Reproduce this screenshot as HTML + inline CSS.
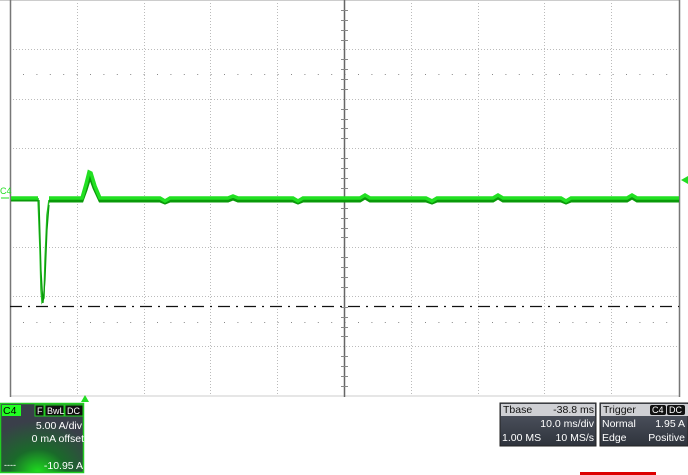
<!DOCTYPE html>
<html><head><meta charset="utf-8"><style>
html,body{margin:0;padding:0;background:#fff;width:688px;height:475px;overflow:hidden;font-family:"Liberation Sans",sans-serif}
.p{position:absolute;font-size:10.5px;color:#fff;line-height:12px}
</style></head><body>
<svg width="688" height="475" style="position:absolute;left:0;top:0">
<g stroke="#bbb" stroke-width="1" stroke-dasharray="1 2" fill="none">
<line x1="77.5" y1="0" x2="77.5" y2="396"/><line x1="144.5" y1="0" x2="144.5" y2="396"/>
<line x1="210.5" y1="0" x2="210.5" y2="396"/><line x1="277.5" y1="0" x2="277.5" y2="396"/>
<line x1="411.5" y1="0" x2="411.5" y2="396"/><line x1="478.5" y1="0" x2="478.5" y2="396"/>
<line x1="544.5" y1="0" x2="544.5" y2="396"/><line x1="611.5" y1="0" x2="611.5" y2="396"/>
<line x1="10" y1="49.5" x2="679" y2="49.5"/><line x1="10" y1="99.5" x2="679" y2="99.5"/>
<line x1="10" y1="148.5" x2="679" y2="148.5"/><line x1="10" y1="247.5" x2="679" y2="247.5"/>
<line x1="10" y1="296.5" x2="679" y2="296.5"/><line x1="10" y1="346.5" x2="679" y2="346.5"/>
</g>
<g stroke="#888" stroke-width="1" stroke-dasharray="1 12.4">
<line x1="23" y1="74.5" x2="679" y2="74.5"/><line x1="23" y1="322.5" x2="679" y2="322.5"/>
</g>
<line x1="0" y1="0.5" x2="680" y2="0.5" stroke="#ccc"/>
<line x1="10" y1="396" x2="680" y2="396" stroke="#ccc"/>
<line x1="10.5" y1="0" x2="10.5" y2="397" stroke="#777" stroke-width="1.5"/>
<line x1="679.5" y1="0" x2="679.5" y2="397" stroke="#777" stroke-width="1.5"/>
<line x1="344.5" y1="0" x2="344.5" y2="397" stroke="#666" stroke-width="1.5"/>
<g stroke="#888" stroke-width="1">
<path d="M341 10.5h7M341 20.5h7M341 30.5h7M341 40.5h7M341 59.5h7M341 69.5h7M341 79.5h7M341 89.5h7M341 109.5h7M341 119.5h7M341 128.5h7M341 138.5h7M341 158.5h7M341 168.5h7M341 178.5h7M341 188.5h7M341 208.5h7M341 218.5h7M341 228.5h7M341 237.5h7M341 257.5h7M341 267.5h7M341 277.5h7M341 287.5h7M341 307.5h7M341 317.5h7M341 327.5h7M341 336.5h7M341 356.5h7M341 366.5h7M341 376.5h7M341 386.5h7"/>
</g>
<line x1="10" y1="306.5" x2="679" y2="306.5" stroke="#111" stroke-width="1.2" stroke-dasharray="12 6 2 6"/>
<polyline fill="none" stroke="#22c022" stroke-width="1.5" points="38,198 40,250 41,290 42,302 44,298 45,260 47,215 49,200"/>
<polyline fill="none" stroke="#0a9a0a" stroke-width="1.2" points="39,200 41,270 43,303 45,280 47,230 49,205"/>
<polyline fill="none" stroke="#0a9a0a" stroke-width="3" points="11,200 38,200 M50,201"/>
<polyline fill="none" stroke="#0a9a0a" stroke-width="3" points="11,200 38,200"/>
<polyline fill="none" stroke="#0a9a0a" stroke-width="3" points="49,201 82,201 86,190 90,177 94,188 100,201 160,201 165,203 170,201 228,201 233,199 238,201 293,201 298,203 303,201 360,201 365,198 370,201 426,201 432,203 437,201 493,201 498,198 503,201 561,201 566,203 571,201 627,201 632,198 637,201 679,201"/>
<polyline fill="none" stroke="#22e022" stroke-width="3.5" points="11,198 38,198"/>
<polyline fill="none" stroke="#22e022" stroke-width="3.5" points="49,198 82,198 86,184 89,172 91,173 95,186 100,198 160,198 165,201 170,198 228,198 233,196 238,198 293,198 298,201 303,198 360,198 365,195 370,198 426,198 432,201 437,198 493,198 498,195 503,198 561,198 566,201 571,198 627,198 632,195 637,198 679,198"/>
<text x="0" y="194" font-size="9" fill="#2d2" font-family="Liberation Sans">C4</text>
<path d="M1 198h8" stroke="#2d2"/>
<path d="M681 180l7-4v8z" fill="#2d2"/>
<path d="M81 402l4-7 4 7z" fill="#2d2"/>
<defs>
<radialGradient id="g" cx="0.45" cy="1" r="0.75"><stop offset="0" stop-color="#1ee01e"/><stop offset="0.45" stop-color="#1a6a2a"/><stop offset="1" stop-color="#3a3f4a"/></radialGradient>
<linearGradient id="h" x1="0" y1="0" x2="0" y2="1"><stop offset="0" stop-color="#555a66"/><stop offset="1" stop-color="#2e333c"/></linearGradient>
</defs>
<rect x="0.5" y="403.5" width="83" height="69" fill="url(#g)" stroke="#2c2" stroke-width="1.5"/>
<rect x="2" y="405" width="19" height="11" fill="#2f2"/>
<rect x="500" y="403" width="96" height="43" fill="url(#h)" stroke="#222"/>
<rect x="501" y="404" width="94" height="12" fill="#cfd0d4"/>
<rect x="600" y="403" width="88" height="43" fill="url(#h)" stroke="#222"/>
<rect x="601" y="404" width="87" height="12" fill="#cfd0d4"/>
<rect x="650" y="405" width="16" height="10" fill="#111" rx="2"/>
<rect x="667" y="405" width="18" height="10" fill="#111" rx="2"/>
<rect x="35" y="405" width="9" height="11" fill="#111" stroke="#2c2"/>
<rect x="45" y="405" width="19" height="11" fill="#111" stroke="#2c2"/>
<rect x="65" y="405" width="18" height="11" fill="#111" stroke="#2c2"/>
<rect x="580" y="472" width="76" height="3" fill="#d00"/>
</svg>
<div class="p" style="left:3px;top:405px;color:#000">C4</div>
<div class="p" style="left:37px;top:405px;font-size:9px">F</div>
<div class="p" style="left:47px;top:405px;font-size:9px">BwL</div>
<div class="p" style="left:67px;top:405px;font-size:9px">DC</div>
<div class="p" style="right:606px;top:420px">5.00 A/div</div>
<div class="p" style="right:604px;top:433px">0 mA offset</div>
<div class="p" style="left:4px;top:459px;font-size:9px">----</div>
<div class="p" style="right:605px;top:460px">-10.95 A</div>
<div class="p" style="left:503px;top:404px;color:#111">Tbase</div>
<div class="p" style="right:94px;top:404px;color:#111">-38.8 ms</div>
<div class="p" style="right:94px;top:418px">10.0 ms/div</div>
<div class="p" style="left:502px;top:432px">1.00 MS</div>
<div class="p" style="right:94px;top:432px">10 MS/s</div>
<div class="p" style="left:603px;top:404px;color:#111">Trigger</div>
<div class="p" style="left:652px;top:404px;font-size:9px">C4</div>
<div class="p" style="left:669px;top:404px;font-size:9px">DC</div>
<div class="p" style="left:602px;top:418px">Normal</div>
<div class="p" style="right:3px;top:418px">1.95 A</div>
<div class="p" style="left:602px;top:432px">Edge</div>
<div class="p" style="right:3px;top:432px">Positive</div>
</body></html>
